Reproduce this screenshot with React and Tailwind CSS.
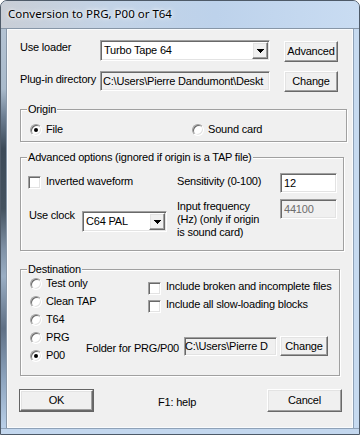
import React from "react";

const F =
  "font-['Liberation_Sans',Arial,sans-serif] text-[11px] leading-[13px] tracking-[-0.2px] text-black";

function Raised({ className = "", children }) {
  return (
    <div
      className={`flex items-center justify-center whitespace-nowrap bg-[#f0f0f0] border border-t-white border-l-white border-r-[#696969] border-b-[#696969] shadow-[inset_-1px_-1px_0_#a0a0a0,inset_1px_1px_0_#e3e3e3] ${className}`}
    >
      {children}
    </div>
  );
}

function Sunken({ className = "", children }) {
  return (
    <div
      className={`flex items-center overflow-hidden whitespace-nowrap border border-t-[#a0a0a0] border-l-[#a0a0a0] border-r-white border-b-white shadow-[inset_1px_1px_0_#696969,inset_-1px_-1px_0_#e3e3e3] ${className}`}
    >
      <div className="min-w-0 flex-1 overflow-hidden mr-[1px]">{children}</div>
    </div>
  );
}

function Arrow() {
  return (
    <svg width="7" height="4" viewBox="0 0 7 4" shapeRendering="crispEdges">
      <path d="M0 0h7v1H0zM1 1h5v1H1zM2 2h3v1H2zM3 3h1v1H3z" fill="#000" />
    </svg>
  );
}

function Combo({ className = "", text }) {
  return (
    <div
      className={`flex items-stretch bg-white p-[1px] border border-t-[#a0a0a0] border-l-[#a0a0a0] border-r-white border-b-white shadow-[inset_1px_1px_0_#696969,inset_-1px_-1px_0_#e3e3e3] ${className}`}
    >
      <div className="flex-1 flex items-center pl-[2px] whitespace-nowrap overflow-hidden">
        {text}
      </div>
      <Raised className="w-[16px]">
        <Arrow />
      </Raised>
    </div>
  );
}

function Radio({ checked, className = "" }) {
  return (
    <div
      className={`w-[12px] h-[12px] shrink-0 rounded-full bg-white border border-t-[#a0a0a0] border-l-[#a0a0a0] border-r-white border-b-white shadow-[inset_1px_1px_0_#696969,inset_-1px_-1px_0_#e3e3e3] flex items-center justify-center ${className}`}
    >
      {checked && <div className="w-[4px] h-[4px] rounded-full bg-black" />}
    </div>
  );
}

function Check({ className = "" }) {
  return (
    <div
      className={`w-[13px] h-[13px] shrink-0 bg-white border border-t-[#a0a0a0] border-l-[#a0a0a0] border-r-white border-b-white shadow-[inset_1px_1px_0_#696969,inset_-1px_-1px_0_#e3e3e3] ${className}`}
    />
  );
}

function Group({ title, className = "", children }) {
  return (
    <div
      className={`relative shrink-0 border border-[#a0a0a0] shadow-[inset_1px_1px_0_#fff,1px_1px_0_#fff] ${className}`}
    >
      <span className="absolute left-[6px] top-[-7px] bg-[#f0f0f0] px-[1px] whitespace-nowrap">
        {title}
      </span>
      {children}
    </div>
  );
}

export default function App() {
  const radios = ["Test only", "Clean TAP", "T64", "PRG", "P00"];
  return (
    <div className="w-[360px] h-[435px] bg-white">
      <div className="w-[360px] h-[435px] flex flex-col border border-[#4e5a68] rounded-t-[7px] overflow-hidden bg-[#c4d8ef]">
        <div className="h-[28px] shrink-0 pl-[7px] pt-[5px] border-b border-[#8796a7] bg-[linear-gradient(to_right,#c9ced6,#c3d3e6_30%,#bdd2eb_60%,#c9dcf2)] font-['Noto_Sans',sans-serif] text-[11.5px] leading-[16px] text-black [text-shadow:0_0_6px_#fff,0_0_3px_#fff]">
          Conversion to PRG, P00 or T64
        </div>
        <div className="flex flex-1 min-h-0">
          <div className="w-[6px] shrink-0 border-r border-[#8796a7] bg-[linear-gradient(to_bottom,#b4c3d3_0%,#a9bacb_15%,#6d7f93_22%,#3c4a58_30%,#44525f_45%,#7f91a5_55%,#9aaec4_62%,#5f7085_75%,#8ea5bf_88%,#b9cfe8_100%)]" />
          <div
            className={`w-[346px] shrink-0 flex flex-col bg-[#f0f0f0] border border-[#f9fbfd] pl-[12px] ${F}`}
          >
            {/* Row 1 */}
            <div className="mt-[10px] flex items-start h-[22px] shrink-0">
              <div className="w-[80px] mt-[1px]">Use loader</div>
              <Combo className="w-[170px] h-[21px]" text="Turbo Tape 64" />
              <Raised className="ml-[14px] mt-[1px] w-[54px] h-[21px]">Advanced</Raised>
            </div>
            {/* Row 2 */}
            <div className="mt-[9px] flex items-start h-[21px] shrink-0">
              <div className="w-[80px] mt-[2px] whitespace-nowrap">Plug-in directory</div>
              <Sunken className="w-[170px] h-[20px] pl-[2px]">
                {"C:\\Users\\Pierre Dandumont\\Deskt"}
              </Sunken>
              <Raised className="ml-[14px] w-[54px] h-[21px]">Change</Raised>
            </div>
            {/* Origin */}
            <Group
              title="Origin"
              className="mt-[17px] w-[327px] h-[33px] pt-[13px] pl-[9px] flex items-start"
            >
              <div className="w-[162px] flex items-start">
                <Radio checked className="mt-[1px]" />
                <span className="ml-[4px]">File</span>
              </div>
              <div className="flex items-start">
                <Radio className="mt-[1px]" />
                <span className="ml-[4px]">Sound card</span>
              </div>
            </Group>
            {/* Advanced */}
            <Group
              title="Advanced options (ignored if origin is a TAP file)"
              className="mt-[15px] w-[324px] h-[94px] pt-[15px] pl-[7px]"
            >
              <div className="flex items-start h-[20px]">
                <div className="w-[149px] flex items-start">
                  <Check className="mt-[3px]" />
                  <span className="ml-[5px] mt-[2px] whitespace-nowrap">Inverted waveform</span>
                </div>
                <div className="w-[103px] mt-[2px] whitespace-nowrap">Sensitivity (0-100)</div>
                <Sunken className="w-[57px] h-[20px] bg-white pl-[3px]">12</Sunken>
              </div>
              <div className="mt-[6px] flex items-start">
                <div className="w-[149px] flex items-start">
                  <span className="ml-[1px] w-[53px] mt-[10px] whitespace-nowrap">Use clock</span>
                  <Combo className="mt-[12px] w-[85px] h-[21px]" text="C64 PAL" />
                </div>
                <div className="w-[103px] mt-[1px] whitespace-nowrap">
                  Input frequency
                  <br />
                  (Hz) (only if origin
                  <br />
                  is sound card)
                </div>
                <Sunken className="w-[57px] h-[20px] pl-[3px] text-[#6d6d6d]">44100</Sunken>
              </div>
            </Group>
            {/* Destination */}
            <Group title="Destination" className="mt-[18px] w-[320px] h-[107px] flex">
              <div className="w-[65px] shrink-0 pl-[9px] pt-[7px] flex flex-col">
                {radios.map((r) => (
                  <div key={r} className="h-[18px] flex items-start whitespace-nowrap">
                    <Radio className="mt-[1px]" checked={r === "P00"} />
                    <span className="ml-[4px]">{r}</span>
                  </div>
                ))}
              </div>
              <div className="flex flex-col pt-[10px]">
                <div className="h-[18px] pl-[62px] flex items-start whitespace-nowrap">
                  <Check className="mt-[2px]" />
                  <span className="ml-[5px]">Include broken and incomplete files</span>
                </div>
                <div className="h-[18px] pl-[62px] flex items-start whitespace-nowrap">
                  <Check className="mt-[2px]" />
                  <span className="ml-[5px]">Include all slow-loading blocks</span>
                </div>
                <div className="mt-[20px] flex items-start">
                  <span className="w-[98px] mt-[6px] whitespace-nowrap">Folder for PRG/P00</span>
                  <Sunken className="mt-[1px] w-[93px] h-[19px]">{"C:\\Users\\Pierre D"}</Sunken>
                  <Raised className="ml-[3px] w-[48px] h-[20px]">Change</Raised>
                </div>
              </div>
            </Group>
            {/* Bottom buttons */}
            <div className="mt-[13px] flex items-start shrink-0">
              <div className="ml-[-1px] w-[75px] h-[23px] border border-[#646464]">
                <Raised className="w-full h-full">OK</Raised>
              </div>
              <div className="w-[173px] pl-[64px] mt-[7px]">F1: help</div>
              <Raised className="w-[75px] h-[23px]">Cancel</Raised>
            </div>
          </div>
          <div className="w-[6px] shrink-0 border-l border-[#8fa2b8] bg-[#c6daf0]" />
        </div>
        <div className="h-[6px] shrink-0 border-t border-[#8fa2b8] bg-[#c3d7ee]" />
      </div>
    </div>
  );
}
